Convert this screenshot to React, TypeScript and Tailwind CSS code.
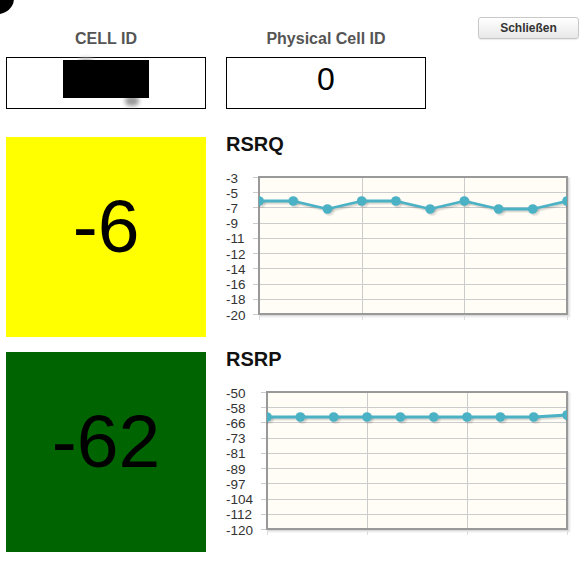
import React from "react";

const FONT = { fontFamily: '"Liberation Sans", Arial, Helvetica, sans-serif' };

type ChartProps = {
  labels: string[];
  plotLeft: number;
  values: number[]; // y offsets from plot top
};

function Chart({ labels, plotLeft, values }: ChartProps) {
  const top = 7;
  const bottom = 144;
  const right = 341;
  const w = right - plotLeft;
  const step = (bottom - top) / (labels.length - 1);
  const vx = [plotLeft + w / 3, plotLeft + (2 * w) / 3];
  const pts = values.map((v, i) => [plotLeft + (i * w) / (values.length - 1), top + v]);
  const d = pts.map((p, i) => `${i === 0 ? "M" : "L"}${p[0].toFixed(1)},${p[1].toFixed(1)}`).join(" ");
  return (
    <svg width="361" height="155" viewBox="0 0 361 155" className="block">
      <defs>
        <clipPath id={`clip-${plotLeft}`}>
          <rect x={plotLeft} y={top} width={w} height={bottom - top} />
        </clipPath>
      </defs>
      <rect x={plotLeft + 2} y={top + 2} width={w} height={bottom - top} fill="none" stroke="rgba(0,0,0,0.07)" strokeWidth="3" />
      <rect x={plotLeft + 1} y={top + 1} width={w} height={bottom - top} fill="none" stroke="rgba(0,0,0,0.08)" strokeWidth="2" />
      <rect x={plotLeft} y={top} width={w} height={bottom - top} fill="#fffdf6" />
      {labels.map((_, k) => {
        const y = Math.round(top + k * step) + 0.5;
        return (
          <g key={k}>
            <line x1={plotLeft} x2={right} y1={y} y2={y} stroke="#cccccc" strokeWidth="1" />
            <line x1={plotLeft - 6} x2={plotLeft} y1={y} y2={y} stroke="#cccccc" strokeWidth="1" />
          </g>
        );
      })}
      {vx.map((x, k) => (
        <line key={k} x1={Math.round(x) + 0.5} x2={Math.round(x) + 0.5} y1={top} y2={bottom} stroke="#cccccc" strokeWidth="1" />
      ))}
      {[plotLeft, ...vx, right].map((x, k) => (
        <line key={`t${k}`} x1={Math.round(x) + 0.5} x2={Math.round(x) + 0.5} y1={bottom} y2={bottom + 6} stroke="#dddddd" strokeWidth="1" />
      ))}
      <rect x={plotLeft} y={top} width={w} height={bottom - top} fill="none" stroke="#999999" strokeWidth="2" />
      {labels.map((l, k) => (
        <text key={l} x={0} y={top + k * step + 5.5} fontSize="13.5" fill="#333333" style={FONT}>
          {l}
        </text>
      ))}
      <g clipPath={`url(#clip-${plotLeft})`}>
        {[3, 2, 1].map((o) => (
          <g key={o} transform={`translate(${o * 0.8},${o * 0.8})`}>
            <path d={d} fill="none" stroke="rgba(0,0,0,0.06)" strokeWidth="3" strokeLinejoin="round" />
            {pts.map((p, i) => (
              <circle key={i} cx={p[0]} cy={p[1]} r="5" fill="rgba(0,0,0,0.05)" />
            ))}
          </g>
        ))}
        <path d={d} fill="none" stroke="#4bb2c5" strokeWidth="2.8" strokeLinejoin="round" />
        {pts.map((p, i) => (
          <circle key={i} cx={p[0]} cy={p[1]} r="4.8" fill="#4bb2c5" />
        ))}
      </g>
    </svg>
  );
}

function Section({
  value,
  bg,
  title,
  labels,
  plotLeft,
  values,
  className,
}: {
  value: string;
  bg: string;
  title: string;
  labels: string[];
  plotLeft: number;
  values: number[];
  className: string;
}) {
  return (
    <div className={`flex ${className}`}>
      <div className={`w-[200px] h-[200px] flex justify-center pt-[47px] ${bg}`}>
        <span className="text-[75px] leading-[84px] text-black">{value}</span>
      </div>
      <div className="ml-[20px] w-[361px] flex flex-col">
        <div className="text-[20px] leading-[15px] font-bold text-[#111]">{title}</div>
        <div className="mt-[18px]">
          <Chart labels={labels} plotLeft={plotLeft} values={values} />
        </div>
      </div>
    </div>
  );
}

export default function App() {
  return (
    <div className="relative w-[587px] h-[567px] overflow-hidden bg-white pl-[6px]" style={FONT}>
      <div className="absolute left-[-18px] top-[-18px] w-[32px] h-[32px] rounded-full bg-black" />
      <div className="flex pt-[17px]">
        <div className="w-[200px] mt-[13px] flex flex-col">
          <div className="text-center text-[16px] leading-[18px] font-bold text-[#555]">CELL ID</div>
          <div className="relative mt-[9px] h-[52px] border border-black">
            <div className="absolute left-[118px] top-[38px] w-[14px] h-[10px] rounded-full bg-[#9a9a9a] blur-[2px]" />
            <div className="absolute left-[72px] top-[0px] w-[14px] h-[6px] rounded-full bg-[#bbb] blur-[2px]" />
            <div className="absolute left-[56px] top-[2px] w-[86px] h-[38px] bg-black" />
          </div>
        </div>
        <div className="w-[200px] ml-[20px] mt-[13px] flex flex-col">
          <div className="text-center text-[16px] leading-[18px] font-bold text-[#555]">Physical Cell ID</div>
          <div className="mt-[9px] h-[52px] border border-black flex justify-center pt-[3px]">
            <span className="text-[32px] leading-[36px] text-black">0</span>
          </div>
        </div>
        <button className="ml-[52px] w-[101px] h-[22px] rounded-[3px] border border-[#c8c8c8] bg-gradient-to-b from-white to-[#e8e8e8] text-[12px] leading-[20px] font-bold text-[#333] shadow-[0_1px_1px_rgba(0,0,0,0.08)]">
          Schließen
        </button>
      </div>
      <Section
        className="mt-[28px]"
        value="-6"
        bg="bg-[#ffff00]"
        title="RSRQ"
        labels={["-3", "-5", "-7", "-9", "-11", "-12", "-14", "-16", "-18", "-20"]}
        plotLeft={33}
        values={[24, 24, 32, 24, 24, 32, 24, 32, 32, 24]}
      />
      <Section
        className="mt-[15px]"
        value="-62"
        bg="bg-[#006400]"
        title="RSRP"
        labels={["-50", "-58", "-66", "-73", "-81", "-89", "-97", "-104", "-112", "-120"]}
        plotLeft={41}
        values={[25, 25, 25, 25, 25, 25, 25, 25, 25, 23]}
      />
    </div>
  );
}
